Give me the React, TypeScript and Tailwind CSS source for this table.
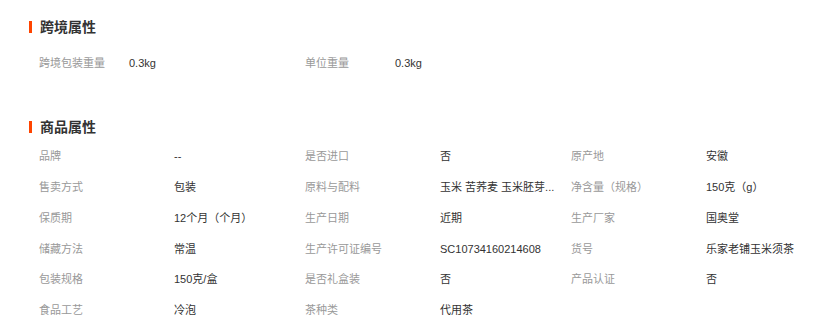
import React from "react";

const font = { fontFamily: '"Liberation Sans", "Noto Sans CJK SC", sans-serif' };

function Title({ text }: { text: string }) {
  return (
    <div className="flex items-center h-[20px]">
      <div className="w-[3px] h-[12px] bg-[#ff4400]" />
      <div className="ml-[8px] text-[14px] font-bold text-[#333333] leading-[20px]">{text}</div>
    </div>
  );
}

const cross = [
  ["跨境包装重量", "0.3kg"],
  ["单位重量", "0.3kg"],
];

const attrs: [string, string][] = [
  ["品牌", "--"],
  ["是否进口", "否"],
  ["原产地", "安徽"],
  ["售卖方式", "包装"],
  ["原料与配料", "玉米 苦荞麦 玉米胚芽..."],
  ["净含量（规格）", "150克（g）"],
  ["保质期", "12个月（个月）"],
  ["生产日期", "近期"],
  ["生产厂家", "国奥堂"],
  ["储藏方法", "常温"],
  ["生产许可证编号", "SC10734160214608"],
  ["货号", "乐家老铺玉米须茶"],
  ["包装规格", "150克/盒"],
  ["是否礼盒装", "否"],
  ["产品认证", "否"],
  ["食品工艺", "冷泡"],
  ["茶种类", "代用茶"],
];

export default function App() {
  return (
    <div className="w-[831px] h-[327px] bg-white overflow-hidden pl-[29px] pt-[17px]" style={font}>
      <Title text="跨境属性" />
      <div className="mt-[11px] grid grid-cols-[266px_266px_266px] pl-[10px] text-[11px]">
        {cross.map(([k, v]) => (
          <div key={k} className="flex h-[31px] items-center">
            <div className="w-[90px] text-[#999999]">{k}</div>
            <div className="text-[#333333]">{v}</div>
          </div>
        ))}
      </div>
      <div className="mt-[38px]">
        <Title text="商品属性" />
      </div>
      <div className="mt-[4px] grid grid-cols-[266px_266px_266px] pl-[10px] text-[11px]">
        {attrs.map(([k, v]) => (
          <div key={k} className="flex h-[30.8px] items-center whitespace-nowrap">
            <div className="w-[135px] text-[#999999]">{k}</div>
            <div className="text-[#333333]">{v}</div>
          </div>
        ))}
      </div>
    </div>
  );
}
